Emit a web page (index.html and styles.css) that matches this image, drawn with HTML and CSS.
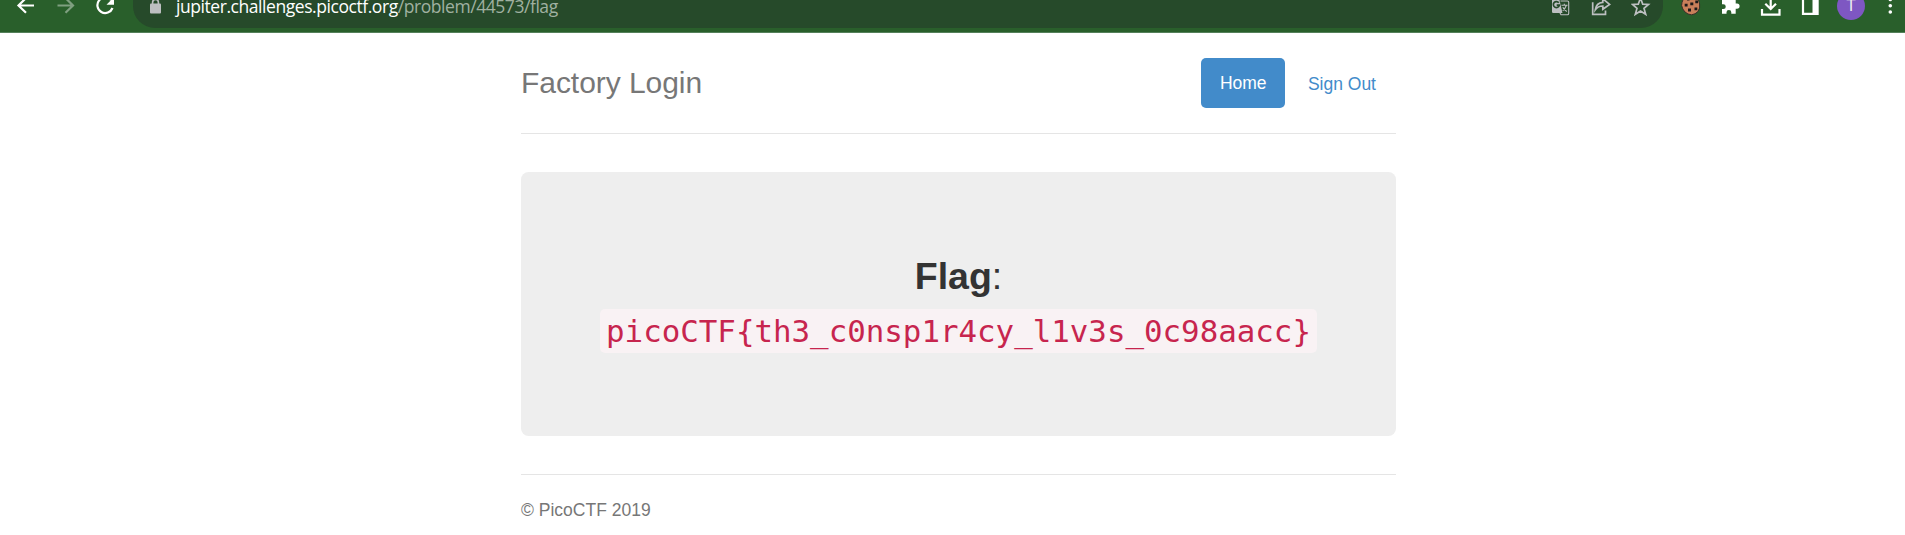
FILE: index.html
```
<!DOCTYPE html>
<html lang="en">
<head>
<meta charset="utf-8">
<title>Factory Login</title>
<link rel="stylesheet" href="styles.css">
</head>
<body>
<div class="toolbar">
  <div class="nav-buttons">
    <svg width="24" height="32" viewBox="14 0 24 32"><path d="M34 5.5H18.5M26 -2L18.5 5.5L26 12.7" class="line white"/></svg>
    <svg width="24" height="32" viewBox="54 0 24 32"><path d="M57.5 5.5H73M65.5 -2L73 5.5L65.5 12.7" class="line dim"/></svg>
    <svg width="24" height="32" viewBox="94 0 24 32"><path d="M111 0A7.8 7.8 0 1 0 112.5 8" class="line white"/><path d="M114 -3V4.8H106.5Z" class="fill-white"/></svg>
  </div>
  <div class="address">
    <svg class="lock" width="13" height="32" viewBox="149 0 13 32"><rect x="150" y="3.6" width="11" height="10" rx="1" class="fill-grey"/><path d="M152.6 5V2.5A2.9 3 0 0 1 158.4 2.5V5" class="line-thin grey"/></svg>
    <div class="url"><span class="host">jupiter.challenges.picoctf.org</span><span class="path">/problem/44573/flag</span></div>
    <div class="address-icons">
      <svg width="20" height="32" viewBox="1551 0 20 32"><path d="M1552 -2H1559L1562.5 13H1553.2Q1552 13 1552 12Z" class="fill-grey"/><path d="M1560.5 1H1567.5Q1568.7 1 1568.7 2.2V13.5Q1568.7 14.8 1567.5 14.8H1561L1559.5 12" class="line-hair grey"/><path d="M1558.8 2.8A3 3 0 1 0 1559.3 5.2H1556.7" class="line-small dark"/><path d="M1561.5 5.3H1567.5M1564.3 3.7V5.3M1566.3 5.5Q1565 9 1562.7 10.7M1562.8 7.3Q1564 9.7 1566.8 11.5" class="line-hair grey"/></svg>
      <svg width="20" height="32" viewBox="1591 0 20 32"><path d="M1592.7 2.2V14.3H1605.5V10.5" class="line-small grey"/><path d="M1595.3 9.8Q1596.2 2.9 1602.8 2.4V-1.2L1609.6 4.4L1602.8 9.3V6Q1598.2 5.9 1595.3 9.8Z" class="line-small grey"/></svg>
      <svg width="20" height="32" viewBox="1631 0 20 32"><path d="M1640.5 -2L1642.7 4.1L1648.5 4.4L1644 8.4L1645.7 14.3L1640.5 11L1635.3 14.3L1637 8.4L1632.5 4.4L1638.3 4.1Z" class="line-small grey"/></svg>
    </div>
  </div>
  <div class="extensions">
    <svg width="22" height="32" viewBox="1680 0 22 32"><path d="M1684 -3L1682 2.5L1681.6 5.5L1682.8 9L1685 12L1688 14L1691.5 14.8L1695 13.8L1698 11.5L1699.6 8L1699.6 4L1698.5 0V-3Z" class="cookie"/><path d="M1684.7 3.8H1687.6V6.6H1684.7ZM1690.3 2.5H1693.3V5.3H1690.3ZM1694.5 7.5H1697.3V10.3H1694.5ZM1688 8.6H1691V11.5H1688ZM1695.3 .5H1698V3.2H1695.3ZM1687 -1.5H1689.5V.5H1687Z" class="chips"/></svg>
    <svg width="22" height="32" viewBox="1720 0 22 32"><path d="M1722 -3H1735.7V3.5H1737A2.6 2.6 0 0 1 1737 8.7H1735.7V13.7H1731.3V12.3A2.4 2.4 0 0 0 1726.5 12.3V13.7H1722V9H1723.4A2.3 2.3 0 0 0 1723.4 4.3H1722Z" class="fill-white"/></svg>
    <svg width="22" height="32" viewBox="1760 0 22 32"><path d="M1770.7 -3V8.6M1765.3 3.7L1770.7 9L1776 3.7" class="line white"/><path d="M1762 9V14.6H1779.5V9" class="line white"/></svg>
    <svg width="22" height="32" viewBox="1800 0 22 32"><path d="M1803 -4V13.8H1817.6V-4" class="line white"/><path d="M1812.5 -3H1818V14H1812.5Z" class="fill-white"/></svg>
    <div class="avatar">T</div>
    <svg width="8" height="32" viewBox="1886 0 8 32"><circle cx="1890.3" cy="-.6" r="1.8" class="fill-white"/><circle cx="1890.3" cy="5.7" r="1.8" class="fill-white"/><circle cx="1890.3" cy="12" r="1.8" class="fill-white"/></svg>
  </div>
</div>
<div class="container">
  <header class="header">
    <h3 class="title">Factory Login</h3>
    <nav class="pills">
      <a class="pill active">Home</a>
      <a class="pill">Sign Out</a>
    </nav>
  </header>
  <main class="jumbotron">
    <p class="flag-label"><b>Flag</b>:</p>
    <code class="flag">picoCTF{th3_c0nsp1r4cy_l1v3s_0c98aacc}</code>
  </main>
  <footer class="footer">© PicoCTF 2019</footer>
</div>
</body>
</html>
```
FILE: styles.css
```
* { box-sizing: border-box; }
body {
  margin: 0;
  height: 535px;
  overflow: hidden;
  background: #fff;
  font-family: "Liberation Sans", Arial, sans-serif;
  color: #333;
}
svg { display: block; flex: none; }
.toolbar {
  display: flex;
  height: 33px;
  overflow: hidden;
  background: #295f2b;
  border-bottom: 1px solid #54805a;
}
.nav-buttons { display: flex; gap: 16px; padding-left: 14px; width: 133px; flex: none; }
.address {
  display: flex;
  width: 1530px;
  height: 28px;
  flex: none;
  background: #264a2a;
  border-radius: 0 0 22px 22px;
}
.lock { margin-left: 16px; }
.url {
  width: 600px;
  margin-left: 14px;
  font: 17.5px/25px "Open Sans", "Noto Sans", sans-serif;
  letter-spacing: -0.44px;
  margin-top: -6px;
  white-space: nowrap;
}
.host { color: #fff; }
.path { color: #a0b1a1; }
.address-icons { display: flex; gap: 20px; margin-left: auto; margin-right: 12px; }
.extensions { display: flex; margin-left: 17px; gap: 18px; }
.avatar {
  width: 28px;
  height: 28px;
  margin: -8px -2px 0 -3px;
  border-radius: 50%;
  background: #7e57c2;
  color: #eee;
  font: 16px/28px Roboto, sans-serif;
  text-align: center;
}
.avatar + svg { margin-left: 5px; }
.line, .line-small, .line-thin, .line-hair { fill: none; stroke-width: 2.2; }
.line-small { stroke-width: 1.7; }
.line-thin { stroke-width: 1.6; }
.line-hair { stroke-width: 1.1; }
.white { stroke: #fff; }
.dim { stroke: #7f9f80; }
.grey { stroke: #bdbfc1; }
.dark { stroke: #264a2a; }
.fill-white { fill: #fff; }
.fill-grey { fill: #bdbfc1; }
.cookie { fill: #c97f5a; stroke: #3a302a; stroke-width: 1; }
.chips { fill: #1c1a1a; }
.container { width: 875px; margin-left: 521px; }
.header {
  display: flex;
  justify-content: space-between;
  height: 101px;
  padding-top: 25px;
  border-bottom: 1px solid #e5e5e5;
}
.title { margin: 0; font-size: 30px; font-weight: 400; line-height: 50px; letter-spacing: -0.05px; color: #777; }
.pills { display: flex; gap: 4px; }
.pill {
  height: 50px;
  padding: 0 20px 0 19px;
  border-radius: 5px;
  font-size: 17.5px;
  line-height: 52px;
  color: #428bca;
}
.active { width: 84px; background: #428bca; color: #fff; line-height: 50px; }
.jumbotron {
  display: flex;
  flex-direction: column;
  align-items: center;
  height: 264px;
  margin-top: 38px;
  padding-top: 78px;
  border-radius: 7.5px;
  background: #eee;
}
.flag-label { margin: 0; font-size: 37.5px; line-height: 53px; }
.flag {
  width: 717px;
  height: 44px;
  margin-top: 6px;
  border-radius: 5px;
  background: #f9f2f4;
  color: #c7254e;
  font: 30.82px/45px "DejaVu Sans Mono", monospace;
  text-align: center;
  white-space: nowrap;
}
.footer {
  margin-top: 38px;
  padding-top: 23px;
  border-top: 1px solid #e5e5e5;
  font-size: 17.5px;
  line-height: 25px;
  color: #777;
}
```
